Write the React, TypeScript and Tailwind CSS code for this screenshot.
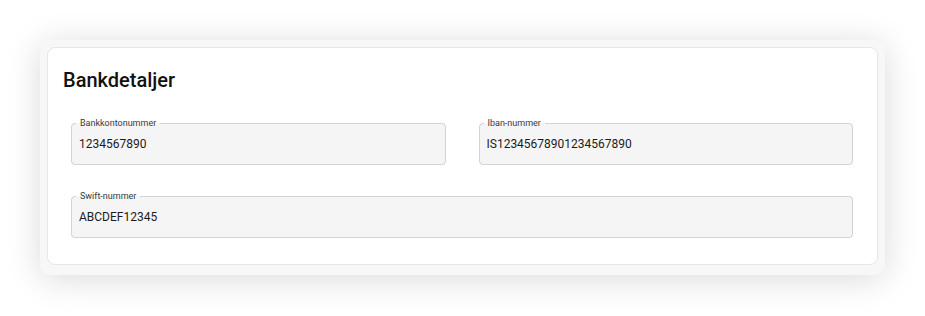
import React from 'react';

const Field = ({ label, value }: { label: string; value: string }) => (
  <fieldset className="rounded-[4px] border border-[#d2d2d8] bg-[#f5f5f5] px-[7px] min-w-0">
    <legend className="ml-[-3px] px-[4px] text-[9px] leading-[10px] text-[#3a3a3a]">{label}</legend>
    <div className="flex h-[30px] items-center pt-[2px] text-[12px] text-[#1c1c1c]">{value}</div>
    <div className="h-[6px]" />
  </fieldset>
);

const App = () => {
  return (
    <div className="min-h-[316px] bg-white p-10 font-['Roboto','Liberation_Sans',sans-serif]">
      <div className="rounded-[10px] bg-[#f7f7f7] px-[7px] pt-[7px] pb-[10px] shadow-[0_4px_34px_rgba(0,0,0,0.15)]">
        <section className="rounded-lg border border-[#e7e7e7] bg-white px-[15px] pt-[18px] pb-[26px]">
          <h2 className="text-[20px] font-medium leading-[28px] text-[#111]">Bankdetaljer</h2>
          <div className="mt-6 grid grid-cols-2 gap-x-[33px] gap-y-[26px] pl-2 pr-[9px]">
            <Field label="Bankkontonummer" value="1234567890" />
            <Field label="Iban-nummer" value="IS12345678901234567890" />
            <div className="col-span-2">
              <Field label="Swift-nummer" value="ABCDEF12345" />
            </div>
          </div>
        </section>
      </div>
    </div>
  );
};

export default App;
